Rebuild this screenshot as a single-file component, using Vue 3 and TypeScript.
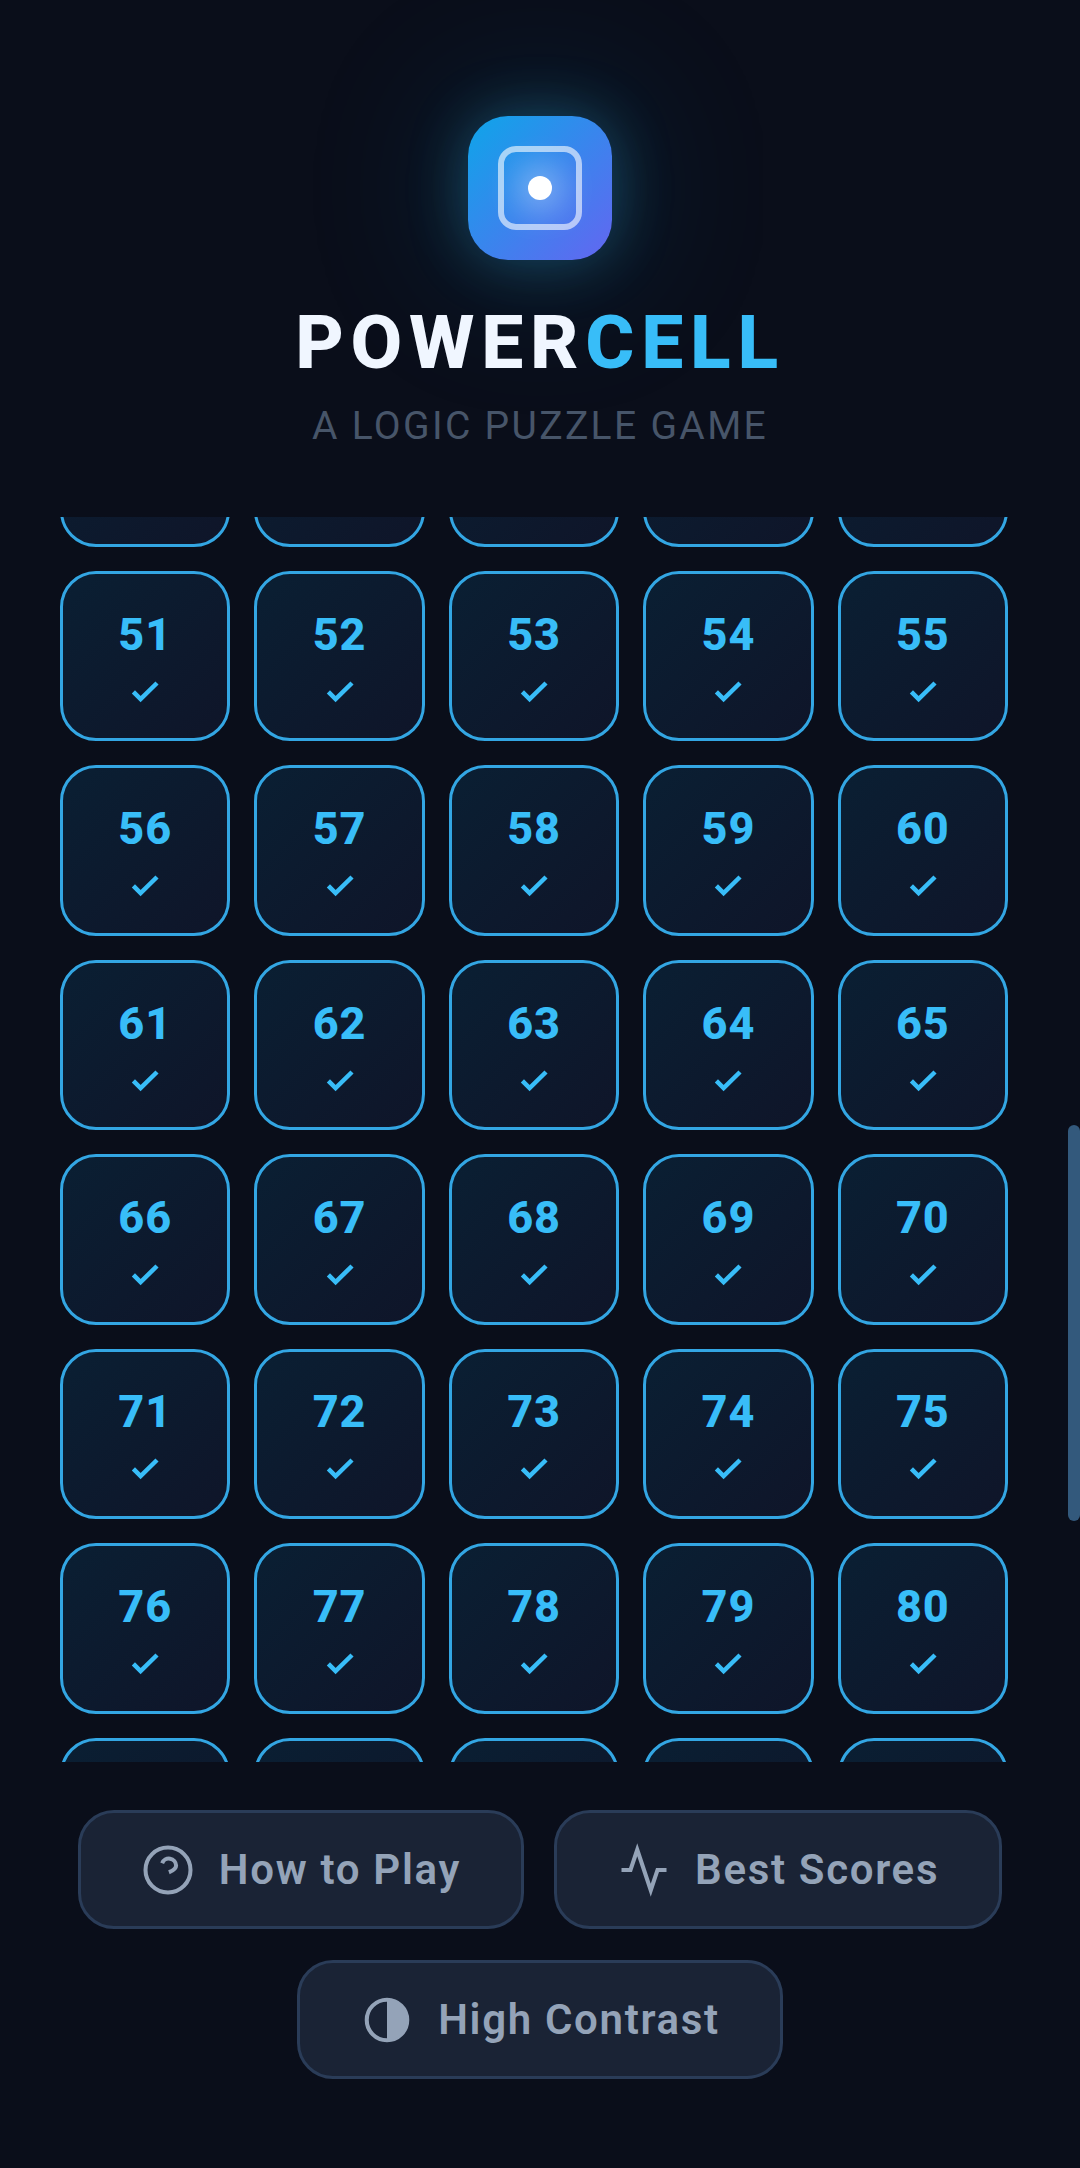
<script setup lang="ts">
import { onMounted, ref } from 'vue'

const levels: number[] = Array.from({ length: 100 }, (_, i) => i + 1)
const scroller = ref<HTMLElement | null>(null)

onMounted(() => {
  if (scroller.value) scroller.value.scrollTop = 1890
})
</script>

<template>
  <main class="screen">
    <header class="masthead">
      <div class="logo">
        <div class="logo-frame"><span class="logo-dot"></span></div>
      </div>
      <h1 class="title">POWER<span class="accent">CELL</span></h1>
      <p class="subtitle">A LOGIC PUZZLE GAME</p>
    </header>

    <section class="board">
      <div ref="scroller" class="scroller">
        <div class="grid">
          <button v-for="n in levels" :key="n" class="cell" type="button">
            <span class="num">{{ n }}</span>
            <svg class="check" width="30" height="24" viewBox="0 0 30 24" fill="none">
              <path d="M3.4 11.8 L10.6 19 L27 3" stroke="currentColor" stroke-width="4.5" />
            </svg>
          </button>
        </div>
      </div>
      <div class="thumb"></div>
    </section>

    <footer class="actions">
      <button class="action" type="button">
        <svg width="54" height="54" viewBox="0 0 24 24" fill="none" stroke="currentColor" stroke-width="1.8">
          <circle cx="12" cy="12" r="10" />
          <path d="M9.4 9a3.2 3.2 0 0 1 6.2 1c0 1.8-3.2 3-3.2 3" />
        </svg>
        <span>How to Play</span>
      </button>
      <button class="action" type="button">
        <svg width="54" height="54" viewBox="0 0 24 24" fill="none" stroke="currentColor" stroke-width="1.8">
          <path d="M22 12h-4l-3 9L9 3l-3 9H2" />
        </svg>
        <span>Best Scores</span>
      </button>
      <button class="action" type="button">
        <svg width="54" height="54" viewBox="0 0 24 24" fill="none" stroke="currentColor" stroke-width="1.8">
          <circle cx="12" cy="12" r="9" />
          <path d="M12 3a9 9 0 0 1 0 18z" fill="currentColor" stroke="none" />
        </svg>
        <span>High Contrast</span>
      </button>
    </footer>
  </main>
</template>

<style>
html, body { margin: 0; background: #0a0e1a; }
</style>

<style scoped>
.screen {
  width: 1080px;
  height: 2168px;
  display: flex;
  flex-direction: column;
  overflow: hidden;
  background: #0a0e1a;
  font-family: Roboto, "Liberation Sans", sans-serif;
}
.masthead {
  height: 517px;
  flex: none;
  box-sizing: border-box;
  padding-top: 116px;
  display: flex;
  flex-direction: column;
  align-items: center;
}
.logo {
  width: 144px;
  height: 144px;
  border-radius: 40px;
  background: linear-gradient(135deg, #0ea5e9, #6366f1);
  box-shadow: 0 0 60px rgba(56, 189, 248, 0.32), 0 0 170px rgba(14, 165, 233, 0.22);
  display: flex;
  align-items: center;
  justify-content: center;
}
.logo-frame {
  width: 84px;
  height: 84px;
  box-sizing: border-box;
  border: 6px solid rgba(255, 255, 255, 0.6);
  border-radius: 18px;
  display: flex;
  align-items: center;
  justify-content: center;
}
.logo-dot {
  width: 24px;
  height: 24px;
  border-radius: 50%;
  background: #fff;
  box-shadow: 0 0 36px 6px rgba(255, 255, 255, 0.6);
}
.title {
  margin: 38px 0 0;
  font-size: 75px;
  line-height: 88px;
  font-weight: 800;
  letter-spacing: 6.75px;
  color: #f0f6ff;
}
.accent { color: #38bdf8; }
.subtitle {
  margin: 17px 0 0;
  font-size: 39px;
  line-height: 46px;
  font-weight: 400;
  letter-spacing: 2.34px;
  color: #475569;
}
.board {
  height: 1245px;
  flex: none;
  position: relative;
}
.scroller {
  height: 100%;
  overflow-y: scroll;
}
.thumb {
  position: absolute;
  top: 608px;
  right: 0;
  width: 12px;
  height: 396px;
  border-radius: 6px;
  background: #33597c;
}
.grid {
  display: grid;
  grid-template-columns: repeat(5, 1fr);
  gap: 24px;
  padding: 0 72px 0 60px;
}
.cell {
  aspect-ratio: 1;
  box-sizing: border-box;
  padding: 0;
  border: 3px solid #33a6e3;
  border-radius: 36px;
  background: linear-gradient(135deg, #0a1f33, #0f1529);
  color: #38bdf8;
  display: flex;
  flex-direction: column;
  align-items: center;
  justify-content: center;
  gap: 19px;
  font-family: inherit;
}
.num {
  font-size: 45px;
  line-height: 52px;
  font-weight: 800;
  letter-spacing: 0.9px;
}
.check { display: block; }
.actions {
  flex: 1;
  display: flex;
  flex-wrap: wrap;
  justify-content: center;
  align-content: flex-start;
  gap: 31px 30px;
  padding-top: 48px;
}
.action {
  height: 119px;
  box-sizing: border-box;
  padding: 0 60px;
  border: 3px solid #2a3c58;
  border-radius: 36px;
  background: #1a2335;
  color: #94a3b8;
  display: flex;
  align-items: center;
  gap: 24px;
  font-family: inherit;
  font-size: 42px;
  font-weight: 600;
  letter-spacing: 1.68px;
}
</style>
